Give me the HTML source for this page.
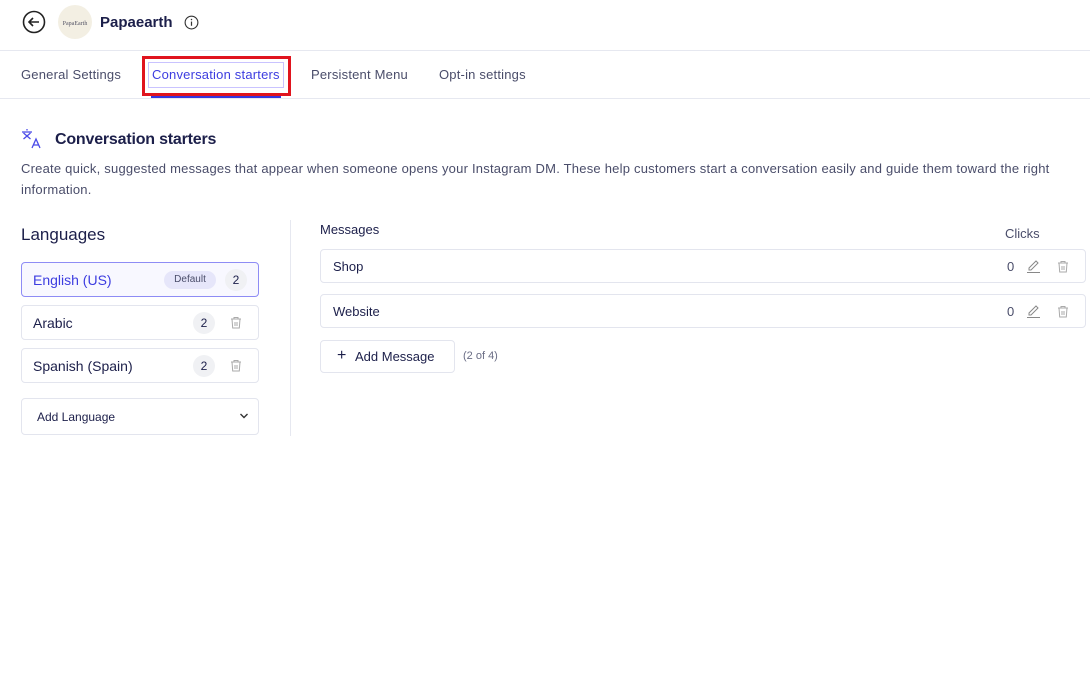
<!DOCTYPE html>
<html><head><meta charset="utf-8"><style>
*{box-sizing:border-box;margin:0;padding:0}
body{width:1090px;height:678px;background:#fff;font-family:"Liberation Sans",sans-serif;color:#1c1f4a;position:relative;overflow:hidden}
.a{position:absolute}
.box{position:absolute;border:1px solid #e3e5ee;border-radius:4px;background:#fff}
.cnt{position:absolute;width:22px;height:22px;border-radius:11px;background:#f0f1f4;font-size:12px;text-align:center;line-height:22px;color:#1c1f4a}
.t{font-size:14px;color:#1c1f4a}
</style></head><body>
<svg class="a" style="left:22px;top:10px" width="24" height="24" viewBox="0 0 24 24"><circle cx="12" cy="12" r="10.5" fill="none" stroke="#222" stroke-width="1.6"/><path d="M17 12H7.5M11 8l-4 4 4 4" fill="none" stroke="#222" stroke-width="1.6"/></svg>
<div class="a" style="left:58px;top:5px;width:34px;height:34px;border-radius:17px;background:#f3efe3;font-family:'Liberation Serif',serif;font-size:6px;color:#556;text-align:center;line-height:38px">PapaEarth</div>
<div class="a" style="left:100px;top:14px;font-size:15px;font-weight:bold;color:#1c1f4a">Papaearth</div>
<svg class="a" style="left:184px;top:15px" width="15" height="15" viewBox="0 0 16 16"><circle cx="8" cy="8" r="6.8" fill="none" stroke="#333" stroke-width="1.2"/><path d="M8 7v4.5" stroke="#333" stroke-width="1.3"/><circle cx="8" cy="4.8" r=".8" fill="#333"/></svg>
<div class="a" style="left:0;top:50px;width:1090px;height:1px;background:#e6e8f0"></div>
<div class="a" style="left:0;top:98px;width:1090px;height:1px;background:#e6e8f0"></div>
<div class="a t" style="left:21px;top:67px;font-size:13px;color:#4a4d6a;letter-spacing:0.2px">General Settings</div>
<div class="a" style="left:142px;top:56px;width:149px;height:40px;border:3px solid #e0141e"></div>
<div class="a" style="left:148px;top:62px;width:136px;height:26px;border:1px solid #c9c3ff"></div>
<div class="a t" style="left:152px;top:67px;font-size:13px;color:#3d3de0;letter-spacing:0.2px">Conversation starters</div>
<div class="a" style="left:151px;top:96px;width:130px;height:2px;background:#3535e0"></div>
<div class="a t" style="left:311px;top:67px;font-size:13px;color:#4a4d6a;letter-spacing:0.2px">Persistent Menu</div>
<div class="a t" style="left:439px;top:67px;font-size:13px;color:#4a4d6a;letter-spacing:0.2px">Opt-in settings</div>
<svg class="a" style="left:21px;top:128px" width="22" height="22" viewBox="0 0 22 22" fill="none" stroke="#4a4ae8" stroke-width="1.3"><path d="M1 4h10M6 1v1.5M2.5 5l7 6M9.5 5l-7 6M11 20l4-9 4 9M12.5 17h5"/></svg>
<div class="a" style="left:55px;top:131px;font-size:16px;font-weight:bold;color:#1c1f4a;letter-spacing:-0.2px">Conversation starters</div>
<div class="a" style="left:21px;top:158px;width:1060px;font-size:13px;line-height:21px;color:#4a4d6a;letter-spacing:0.22px">Create quick, suggested messages that appear when someone opens your Instagram DM. These help customers start a conversation easily and guide them toward the right information.</div>
<div class="a" style="left:21px;top:225px;font-size:17px;color:#1c1f4a">Languages</div>
<div class="a" style="left:290px;top:220px;width:1px;height:216px;background:#e6e8f0"></div>
<div class="box" style="left:21px;top:262px;width:238px;height:35px;border-color:#8e8cf5;background:#f8f8ff"></div>
<div class="a t" style="left:33px;top:272px;color:#3d3de0">English (US)</div>
<div class="a" style="left:164px;top:271px;width:52px;height:18px;border-radius:9px;background:#e6e6fa;font-size:10px;color:#4a4d6a;text-align:center;line-height:18px">Default</div>
<div class="cnt" style="left:225px;top:269px">2</div>
<div class="box" style="left:21px;top:305px;width:238px;height:35px"></div>
<div class="a t" style="left:33px;top:315px">Arabic</div>
<div class="cnt" style="left:193px;top:312px">2</div>
<div class="box" style="left:21px;top:348px;width:238px;height:35px"></div>
<div class="a t" style="left:33px;top:358px">Spanish (Spain)</div>
<div class="cnt" style="left:193px;top:355px">2</div>
<svg class="a" style="left:230px;top:316px" width="12" height="13" viewBox="0 0 12 13" fill="none" stroke="#aaa" stroke-width="1"><path d="M1 3h10M4 3V1.5h4V3M2 3l.7 9h6.6L10 3M5 6v4M7 6v4"/></svg>
<svg class="a" style="left:230px;top:359px" width="12" height="13" viewBox="0 0 12 13" fill="none" stroke="#aaa" stroke-width="1"><path d="M1 3h10M4 3V1.5h4V3M2 3l.7 9h6.6L10 3M5 6v4M7 6v4"/></svg>
<div class="box" style="left:21px;top:398px;width:238px;height:37px"></div>
<div class="a" style="left:37px;top:410px;font-size:12px;color:#1c1f4a">Add Language</div>
<svg class="a" style="left:239px;top:412px" width="10" height="8" viewBox="0 0 10 8"><path d="M1.5 2l3.5 3.5L8.5 2" fill="none" stroke="#333" stroke-width="1.4"/></svg>
<div class="a" style="left:320px;top:222px;font-size:13px;color:#1c1f4a">Messages</div>
<div class="a" style="left:1005px;top:226px;font-size:13px;color:#4a4d6a">Clicks</div>
<div class="box" style="left:320px;top:249px;width:766px;height:34px"></div>
<div class="a" style="left:333px;top:259px;font-size:13px">Shop</div>
<div class="box" style="left:320px;top:294px;width:766px;height:34px"></div>
<div class="a" style="left:333px;top:304px;font-size:13px">Website</div>
<div class="a" style="left:1007px;top:259px;font-size:13px;color:#4a4d6a">0</div>
<div class="a" style="left:1007px;top:304px;font-size:13px;color:#4a4d6a">0</div>
<svg class="a" style="left:1026px;top:258px" width="15" height="16" viewBox="0 0 15 16" fill="none" stroke="#888" stroke-width="1"><path d="M3 10l7-7 2 2-7 7H3z M1 14.5h13"/></svg>
<svg class="a" style="left:1026px;top:303px" width="15" height="16" viewBox="0 0 15 16" fill="none" stroke="#888" stroke-width="1"><path d="M3 10l7-7 2 2-7 7H3z M1 14.5h13"/></svg>
<svg class="a" style="left:1057px;top:260px" width="12" height="13" viewBox="0 0 12 13" fill="none" stroke="#aaa" stroke-width="1"><path d="M1 3h10M4 3V1.5h4V3M2 3l.7 9h6.6L10 3M5 6v4M7 6v4"/></svg>
<svg class="a" style="left:1057px;top:305px" width="12" height="13" viewBox="0 0 12 13" fill="none" stroke="#aaa" stroke-width="1"><path d="M1 3h10M4 3V1.5h4V3M2 3l.7 9h6.6L10 3M5 6v4M7 6v4"/></svg>
<div class="box" style="left:320px;top:340px;width:135px;height:33px"></div>
<div class="a" style="left:337px;top:347px;font-size:16px">+</div>
<div class="a" style="left:355px;top:349px;font-size:13px">Add Message</div>
<div class="a" style="left:463px;top:350px;font-size:11px;color:#6a6d85">(2 of 4)</div>
</body></html>
